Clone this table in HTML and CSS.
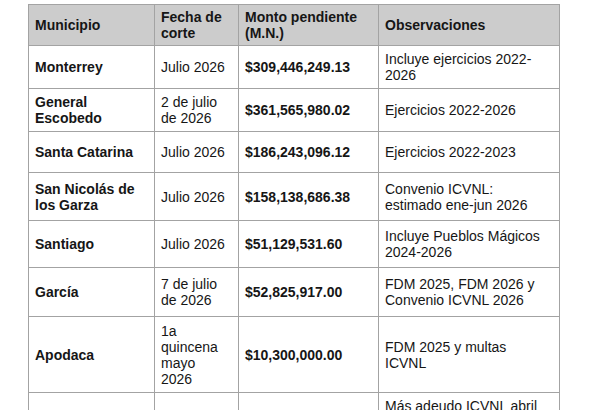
FILE: index.html
```html
<!DOCTYPE html>
<html lang="es">
<head>
    <meta charset="UTF-8">
    <meta name="viewport" content="width=device-width, initial-scale=1.0">
    <title>Adeudos municipales</title>
    <link rel="stylesheet" href="styles.css">
</head>
<body>
    <table class="debt-table">
        <colgroup>
            <col class="col-mun">
            <col class="col-date">
            <col class="col-amount">
            <col class="col-notes">
        </colgroup>
        <thead>
            <tr class="row-head">
                <th>Municipio</th>
                <th>Fecha de corte</th>
                <th>Monto pendiente (M.N.)</th>
                <th>Observaciones</th>
            </tr>
        </thead>
        <tbody>
            <tr class="row-a">
                <td class="bold">Monterrey</td>
                <td>Julio 2026</td>
                <td class="bold">$309,446,249.13</td>
                <td>Incluye ejercicios 2022-2026</td>
            </tr>
            <tr class="row-a">
                <td class="bold">General Escobedo</td>
                <td>2 de julio de 2026</td>
                <td class="bold">$361,565,980.02</td>
                <td>Ejercicios 2022-2026</td>
            </tr>
            <tr class="row-b">
                <td class="bold">Santa Catarina</td>
                <td>Julio 2026</td>
                <td class="bold">$186,243,096.12</td>
                <td>Ejercicios 2022-2023</td>
            </tr>
            <tr class="row-c">
                <td class="bold">San Nicolás de los Garza</td>
                <td>Julio 2026</td>
                <td class="bold">$158,138,686.38</td>
                <td>Convenio ICVNL: estimado ene-jun 2026</td>
            </tr>
            <tr class="row-d">
                <td class="bold">Santiago</td>
                <td>Julio 2026</td>
                <td class="bold">$51,129,531.60</td>
                <td>Incluye Pueblos Mágicos 2024-2026</td>
            </tr>
            <tr class="row-e">
                <td class="bold">García</td>
                <td>7 de julio de 2026</td>
                <td class="bold">$52,825,917.00</td>
                <td>FDM 2025, FDM 2026 y Convenio ICVNL 2026</td>
            </tr>
            <tr class="row-f">
                <td class="bold">Apodaca</td>
                <td>1a quincena mayo 2026</td>
                <td class="bold">$10,300,000.00</td>
                <td>FDM 2025 y multas ICVNL</td>
            </tr>
            <tr class="row-last">
                <td></td>
                <td></td>
                <td></td>
                <td class="top">Más adeudo ICVNL abril</td>
            </tr>
        </tbody>
    </table>
</body>
</html>
```

FILE: styles.css
```css
* {
    margin: 0;
    padding: 0;
    box-sizing: border-box;
}

body {
    background-color: #ffffff;
    font-family: 'Liberation Sans', Arial, sans-serif;
    color: #161616;
    padding: 4px 0 0 28px;
    overflow: hidden;
}

.debt-table {
    border-collapse: collapse;
    table-layout: fixed;
    width: 531px;
    font-size: 14px;
    line-height: 16px;
}

.col-mun { width: 126px; }
.col-date { width: 84px; }
.col-amount { width: 140px; }
.col-notes { width: 181px; }

.debt-table th,
.debt-table td {
    border: 1px solid #a3a3a3;
    padding: 0 10px 0 6px;
    text-align: left;
    vertical-align: middle;
}

.debt-table th {
    background-color: #cccccc;
    font-weight: bold;
}

.bold {
    font-weight: bold;
}

.row-head { height: 41px; }
.row-a { height: 43px; }
.row-b { height: 41px; }
.row-c { height: 48px; }
.row-d { height: 47px; }
.row-e { height: 49px; }
.row-f { height: 76px; }
.row-last { height: 60px; }

.debt-table td.top {
    vertical-align: top;
    padding-top: 5px;
}
```
